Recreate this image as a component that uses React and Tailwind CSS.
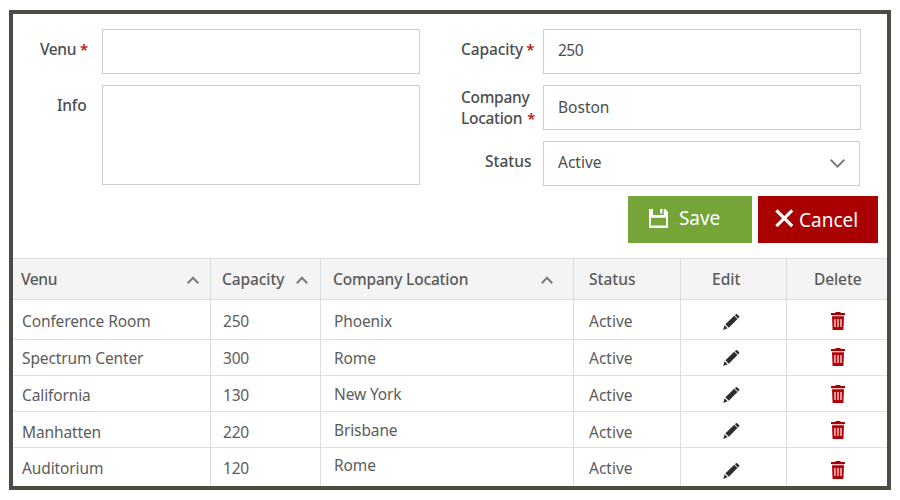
const rows = [
  { venue: "Conference Room", capacity: "250", location: "Phoenix", height: "h-10", text: "pt-[11px]", place: "pt-[11px]", pencil: "pt-[14px]", trash: "pt-[12px]" },
  { venue: "Spectrum Center", capacity: "300", location: "Rome", height: "h-9", text: "pt-[8px]", place: "pt-[8px]", pencil: "pt-[10px]", trash: "pt-[8px]" },
  { venue: "California", capacity: "130", location: "New York", height: "h-9", text: "pt-[9px]", place: "pt-[8px]", pencil: "pt-[11px]", trash: "pt-[9px]" },
  { venue: "Manhatten", capacity: "220", location: "Brisbane", height: "h-9", text: "pt-[10px]", place: "pt-[8px]", pencil: "pt-[11px]", trash: "pt-[9px]" },
  { venue: "Auditorium", capacity: "120", location: "Rome", height: "h-[38px]", text: "pt-[10px]", place: "pt-[7px]", pencil: "pt-[15px]", trash: "pt-[13px]" },
];

const columns = "grid grid-cols-[198px_110px_253px_107px_106px_100px]";

function Star({ className = "ml-[4px]" }) {
  return <span className={`${className} text-[15px] leading-none font-semibold text-[#c4121b]`}>*</span>;
}

function Chevron({ className, d, viewBox }) {
  return (
    <svg className={className} viewBox={viewBox} fill="none" stroke="#7b7b7b" strokeWidth="2">
      <path d={d} />
    </svg>
  );
}

function SortArrow() {
  return <Chevron className="mt-[7px] h-2 w-3" viewBox="0 0 12 8" d="M0.8 7.3 L6 1.7 L11.2 7.3" />;
}

function Pencil() {
  return (
    <svg className="h-4 w-[17px]" viewBox="0 0 17 16" fill="#2d2d2d">
      <path d="M11.9 1.2 L12.9 0.3 Q13.7 -0.2 14.4 0.4 L16 2 Q16.6 2.7 16 3.5 L15 4.5 Z" />
      <path d="M11.2 1.8 L14.5 5.1 L5.8 13.7 L2.4 10.3 Z" />
      <path d="M1.6 11.3 L4.6 14.3 L0.2 15.9 Z" />
    </svg>
  );
}

function Trash() {
  return (
    <svg className="h-[18px] w-[14px]" viewBox="0 0 14 18">
      <path d="M0 1 H4 L5 0 H9 L10 1 H14 V3 H0 Z" fill="#a30008" />
      <path d="M0.8 3.2 H13.2 V4.2 H0.8 Z" fill="#f0b5b5" />
      <path d="M1 4.2 H13 L12.4 18 H1.6 Z" fill="#b00008" />
      <path d="M4 7 V15 M7 7 V15 M10 7 V15" stroke="#ffe3e3" strokeWidth="1.3" fill="none" />
    </svg>
  );
}

function Form() {
  return (
    <form className="h-[244px] pt-[15px]">
      <div className="flex">
        <div className="w-[407px]">
          <div className="flex">
            <div className="w-[89px] pt-[10px] pl-[27px] font-medium tracking-[-0.4px] whitespace-nowrap">
              Venu<Star />
            </div>
            <div className="h-[45px] w-[318px] border border-[#cdcdcd]" />
          </div>
          <div className="mt-[11px] flex">
            <div className="w-[89px] pt-[10px] pl-[44px] font-medium tracking-[-0.2px]">Info</div>
            <div className="h-[100px] w-[318px] border border-[#cdcdcd]" />
          </div>
        </div>
        <div className="pl-10">
          <div className="flex">
            <div className="w-[83px] pt-[10px] pl-px font-medium tracking-[-0.12px] whitespace-nowrap">
              Capacity<Star className="ml-[3px]" />
            </div>
            <div className="h-[45px] w-[318px] border border-[#cdcdcd] pt-[10px] pl-[14px] tracking-[-0.5px]">250</div>
          </div>
          <div className="mt-[11px] flex">
            <div className="w-[83px] pt-[2px] pl-px leading-[21px] font-medium tracking-[-0.3px] whitespace-nowrap">
              Company
              <br />
              Location<Star className="ml-[5px]" />
            </div>
            <div className="h-[45px] w-[318px] border border-[#cdcdcd] pt-[11px] pl-[14px]">Boston</div>
          </div>
          <div className="mt-[11px] flex">
            <div className="w-[83px] pt-[10px] pl-[25px] font-medium">Status</div>
            <div className="flex h-[45px] w-[317px] justify-between border border-[#cdcdcd] pt-[10px] pr-[14px] pl-[14px]">
              Active
              <Chevron className="mt-[7px] h-[9px] w-[15px]" viewBox="0 0 15 9" d="M0.7 0.8 L7.5 7.6 L14.3 0.8" />
            </div>
          </div>
        </div>
      </div>
      <div className="mt-[10px] flex justify-end gap-[6px] pr-[9px] text-[19px] leading-6 text-white">
        <button type="button" className="flex h-[47px] w-[124px] items-start bg-[#76a537] pt-[10px] pl-[21px]">
          <svg className="mt-[3px] h-[19px] w-[19px]" viewBox="0 0 19 19" fill="#fff">
            <path fillRule="evenodd" d="M0 0 H4 V6 H14.8 V0 H16.2 L19 2.8 V19 H0 Z M2 9.6 V16.6 H17 V9.6 Q17 8.8 16.2 8.8 H2.8 Q2 8.8 2 9.6 Z" />
            <path d="M11 0 H13.4 V4.6 H11 Z" />
          </svg>
          <span className="ml-[11px] tracking-[-0.1px]">Save</span>
        </button>
        <button type="button" className="flex h-[47px] w-[120px] items-start bg-[#a90000] pt-[12px] pl-[17px]">
          <svg className="mt-px h-[19px] w-[19px]" viewBox="0 0 19 19" fill="none" stroke="#fff" strokeWidth="3.2">
            <path d="M1.4 1.4 L17.2 17.2 M17.2 1.4 L1.4 17.2" />
          </svg>
          <span className="ml-[5px]">Cancel</span>
        </button>
      </div>
    </form>
  );
}

function Table() {
  const head = "border-r border-[#dcdcdc] pt-[10px]";
  const cell = "border-r border-[#dedede]";
  return (
    <div>
      <div className={`${columns} h-[42px] border-y border-[#dcdcdc] bg-[#f4f4f4] font-medium text-[#5a5a5a]`}>
        <div className={`${head} flex justify-between pr-[11px] pl-2 tracking-[-0.4px]`}>Venu<SortArrow /></div>
        <div className={`${head} flex justify-between pr-[12px] pl-[11px] tracking-[-0.1px]`}>Capacity<SortArrow /></div>
        <div className={`${head} flex justify-between pr-[20px] pl-[12px] tracking-[-0.17px]`}>Company Location<SortArrow /></div>
        <div className={`${head} pl-[15px]`}>Status</div>
        <div className={`${head} pl-[31px]`}>Edit</div>
        <div className="pt-[10px] pl-[27px] tracking-[-0.1px]">Delete</div>
      </div>
      {rows.map((row, i) => (
        <div key={row.venue} className={`${columns} ${row.height} ${i < rows.length - 1 ? "border-b border-[#dedede]" : ""} tracking-[-0.12px] text-[#5c5c5c]`}>
          <div className={`${cell} ${row.text} pl-[9px]`}>{row.venue}</div>
          <div className={`${cell} ${row.text} pl-[12px] tracking-[-0.2px]`}>{row.capacity}</div>
          <div className={`${cell} ${row.place} pl-[13px]`}>{row.location}</div>
          <div className={`${cell} ${row.text} pl-[15px] tracking-[0px]`}>Active</div>
          <div className={`${cell} ${row.pencil} pl-[42px]`}><Pencil /></div>
          <div className={`${row.trash} pl-[44px]`}><Trash /></div>
        </div>
      ))}
    </div>
  );
}

export default function App() {
  return (
    <div className="h-[500px] w-[900px] bg-white pt-[10px] pl-[9px]">
      <div className="h-[480px] w-[882px] overflow-hidden border-4 border-[#4b4c43] bg-white font-['Noto_Sans',sans-serif] text-[15.5px] leading-5 text-[#4c4d4f]">
        <Form />
        <Table />
      </div>
    </div>
  );
}
